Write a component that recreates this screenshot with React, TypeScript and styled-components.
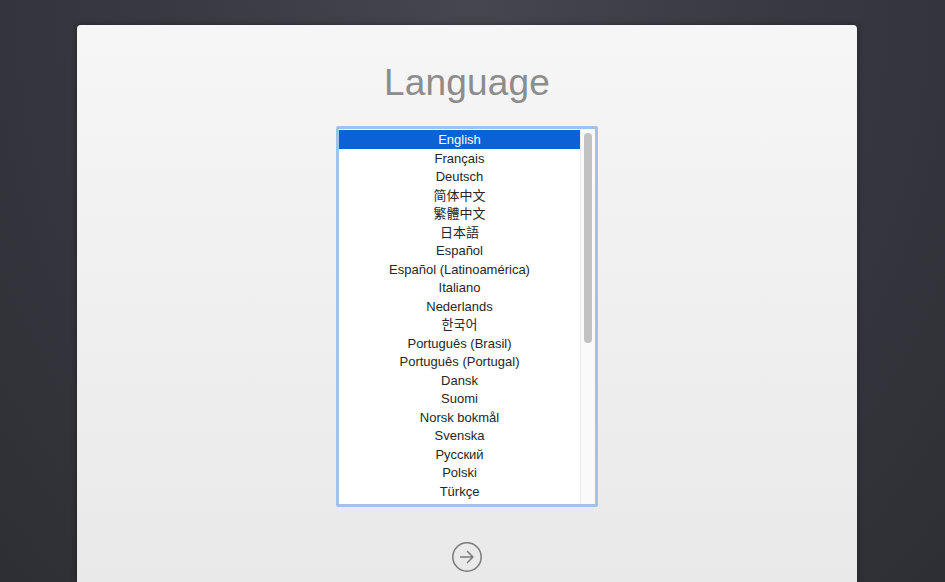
import React, { useState } from "react";
import styled, { createGlobalStyle } from "styled-components";

const languages = [
  "English",
  "Français",
  "Deutsch",
  "简体中文",
  "繁體中文",
  "日本語",
  "Español",
  "Español (Latinoamérica)",
  "Italiano",
  "Nederlands",
  "한국어",
  "Português (Brasil)",
  "Português (Portugal)",
  "Dansk",
  "Suomi",
  "Norsk bokmål",
  "Svenska",
  "Русский",
  "Polski",
  "Türkçe",
];

const Global = createGlobalStyle`
  html, body {
    margin: 0;
    height: 100%;
    overflow: hidden;
  }
  body {
    background: radial-gradient(ellipse at 50% 0%, #46474e 0%, #393a41 45%, #2e2f35 100%);
    font-family: "Liberation Sans", "Noto Sans CJK SC", "Noto Sans CJK KR", sans-serif;
  }
`;

const Screen = styled.div`
  height: 582px;
  padding: 25px 0 0 77px;
  box-sizing: border-box;
  overflow: hidden;
`;

const Panel = styled.div`
  width: 780px;
  height: 557px;
  border-radius: 4px 4px 0 0;
  background: linear-gradient(#f6f6f6, #e9e9e9);
  display: flex;
  flex-direction: column;
  align-items: center;
  box-shadow: 0 0 6px rgba(0, 0, 0, 0.35);
`;

const Title = styled.h1`
  margin: 37px 0 0;
  height: 64px;
  font-weight: 400;
  font-size: 37px;
  line-height: 42px;
  color: #8c8c8c;
  letter-spacing: 0.2px;
`;

const ListBox = styled.div`
  width: 256px;
  height: 375px;
  border: 3px solid #9ec3ec;
  border-radius: 2px;
  background: #fff;
  display: flex;
`;

const Rows = styled.div`
  flex: 1;
  padding-top: 1px;
`;

const Row = styled.div<{ $selected: boolean }>`
  height: 18.5px;
  line-height: 20px;
  text-align: center;
  font-size: 13px;
  color: ${(p) => (p.$selected ? "#fff" : "#262626")};
  background: ${(p) => (p.$selected ? "#0b62d6" : "transparent")};
  cursor: default;
  white-space: nowrap;
`;

const Track = styled.div`
  width: 15px;
  background: #fafafa;
  border-left: 1px solid #ececec;
  padding: 4px 0 0 3px;
  box-sizing: border-box;
`;

const Thumb = styled.div`
  width: 8px;
  height: 210px;
  border-radius: 4px;
  background: #c2c2c2;
`;

const NextButton = styled.button`
  margin: 34px 0 0;
  padding: 0;
  border: none;
  background: none;
  width: 32px;
  height: 32px;
  cursor: pointer;
`;

export default function App() {
  const [selected, setSelected] = useState(0);

  return (
    <>
      <Global />
      <Screen>
        <Panel>
          <Title>Language</Title>
          <ListBox>
            <Rows>
              {languages.map((lang, i) => (
                <Row key={lang} $selected={i === selected} onClick={() => setSelected(i)}>
                  {lang}
                </Row>
              ))}
            </Rows>
            <Track>
              <Thumb />
            </Track>
          </ListBox>
          <NextButton aria-label="Continue">
            <svg width="32" height="32" viewBox="0 0 32 32" fill="none" stroke="#7a7a7a" strokeWidth="1.5">
              <circle cx="16" cy="16" r="14.2" />
              <path d="M9.5 16h12.5M16.5 10.5l5.5 5.5-5.5 5.5" strokeLinecap="round" strokeLinejoin="round" />
            </svg>
          </NextButton>
        </Panel>
      </Screen>
    </>
  );
}
